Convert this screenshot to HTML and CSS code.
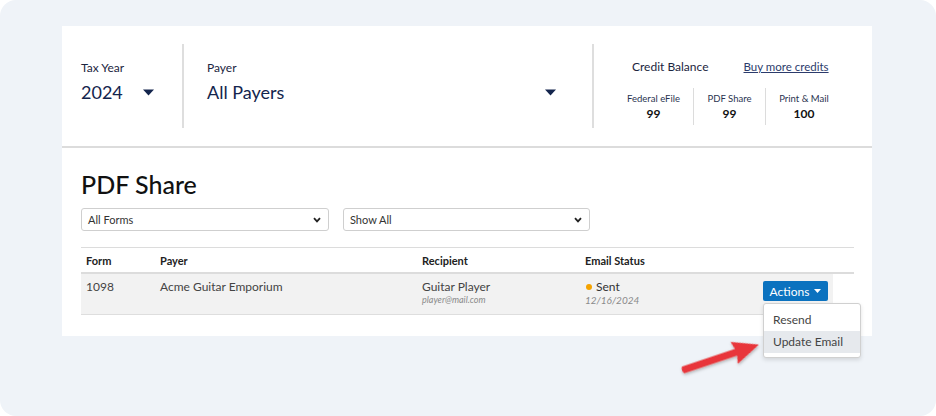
FILE: index.html
```html
<!DOCTYPE html>
<html>
<head>
<meta charset="utf-8">
<link rel="stylesheet" href="styles.css">
</head>
<body>
<div class="frame">
  <div class="card">
    <div class="header">
      <div class="sec sec-year">
        <div class="label">Tax Year</div>
        <div class="value-row">
          <span class="value">2024</span>
          <svg class="caret" width="11" height="7" viewBox="0 0 11 7"><path d="M0 0.5 H11 L5.5 6.5 Z" fill="#14254d"/></svg>
        </div>
      </div>
      <div class="sec sec-payer">
        <div class="label">Payer</div>
        <div class="value-row spread">
          <span class="value">All Payers</span>
          <svg class="caret" width="11" height="7" viewBox="0 0 11 7"><path d="M0 0.5 H11 L5.5 6.5 Z" fill="#14254d"/></svg>
        </div>
      </div>
      <div class="sec sec-credit">
        <div class="credit-top">
          <span class="credit-title">Credit Balance</span>
          <a class="buy" href="#">Buy more credits</a>
        </div>
        <div class="credit-cols">
          <div class="ccol c1"><div class="clabel">Federal eFile</div><div class="cnum">99</div></div>
          <div class="ccol c2"><div class="clabel">PDF Share</div><div class="cnum">99</div></div>
          <div class="ccol c3"><div class="clabel">Print &amp; Mail</div><div class="cnum">100</div></div>
        </div>
      </div>
    </div>
    <div class="body">
      <h1 class="title">PDF Share</h1>
      <div class="filters">
        <div class="select"><span>All Forms</span>
          <svg width="8" height="6" viewBox="0 0 8 6"><path d="M1 1.2 L4 4.4 L7 1.2" fill="none" stroke="#222" stroke-width="1.8"/></svg>
        </div>
        <div class="select"><span>Show All</span>
          <svg width="8" height="6" viewBox="0 0 8 6"><path d="M1 1.2 L4 4.4 L7 1.2" fill="none" stroke="#222" stroke-width="1.8"/></svg>
        </div>
      </div>
      <div class="table">
        <div class="thead">
          <div class="th">Form</div>
          <div class="th">Payer</div>
          <div class="th">Recipient</div>
          <div class="th">Email Status</div>
          <div class="th"></div>
        </div>
        <div class="trow">
          <div class="td">1098</div>
          <div class="td">Acme Guitar Emporium</div>
          <div class="td"><div>Guitar Player</div><div class="sub">player@mail.com</div></div>
          <div class="td"><div class="status"><span class="dot"></span>Sent</div><div class="sub date">12/16/2024</div></div>
          <div class="td td-act">
            <div class="actions">Actions
              <svg width="7" height="4" viewBox="0 0 7 4"><path d="M0 0 H7 L3.5 4 Z" fill="#fff"/></svg>
            </div>
            <div class="menu">
              <div class="item">Resend</div>
              <div class="item active">Update Email</div>
            </div>
          </div>
        </div>
      </div>
    </div>
  </div>
  <svg class="arrow" width="100" height="60" viewBox="0 0 100 60">
    <defs>
      <filter id="sh" x="-20%" y="-40%" width="140%" height="180%">
        <feDropShadow dx="0" dy="1.5" stdDeviation="1.5" flood-color="#000" flood-opacity="0.3"/>
      </filter>
    </defs>
    <g transform="translate(13,45) rotate(-18.5)" filter="url(#sh)">
      <path d="M0 -3.4 L56 -3.4 L54 -11.5 L80 0 L54 11.5 L56 3.4 L0 3.4 Q-2 0 0 -3.4 Z" fill="#e8363a"/>
    </g>
  </svg>
</div>
</body>
</html>
```

FILE: styles.css
```css
* { box-sizing: border-box; }
html, body { margin: 0; padding: 0; background: #fff; }
body { font-family: Lato, "Open Sans", Arial, sans-serif; }

.frame {
  position: relative;
  width: 936px;
  height: 416px;
  background: #eff3f8;
  border-radius: 16px;
  padding: 26px 0 0 62px;
}

.card {
  width: 810px;
  height: 310px;
  background: #fff;
}

.header {
  display: flex;
  height: 122px;
  padding: 18px 0;
  border-bottom: 2px solid #dcdcdc;
}

.sec { height: 84px; }
.sec-year {
  width: 122px;
  padding: 16px 0 0 19px;
  border-right: 2px solid #dedede;
}
.sec-payer {
  width: 410px;
  padding: 16px 36px 0 23px;
  border-right: 2px solid #dedede;
}
.sec-credit {
  flex: 1;
  padding: 14px 0 0 20px;
}

.label {
  font-size: 12px;
  line-height: 16px;
  color: #1b2540;
}
.value-row {
  display: flex;
  align-items: center;
  margin-top: 5px;
  height: 22px;
}
.value-row.spread { justify-content: space-between; }
.value {
  font-size: 18px;
  line-height: 22px;
  color: #14254d;
}
.sec-year .caret { margin-left: 20px; }

.credit-top {
  display: flex;
  align-items: center;
  padding-left: 18px;
  height: 16px;
}
.credit-title {
  font-size: 12px;
  color: #1b2540;
}
.buy {
  margin-left: 35px;
  font-size: 11.5px;
  color: #2c3b6c;
  text-decoration: underline;
}
.credit-cols {
  display: flex;
  margin-top: 14px;
}
.ccol {
  padding: 4px 0 3px;
  text-align: center;
  border-right: 1px solid #dcdcdc;
}
.c1 { width: 80px; }
.c2 { width: 72px; }
.c3 { width: 76px; border-right: none; }
.clabel {
  font-size: 9.5px;
  line-height: 13px;
  color: #2a3350;
  white-space: nowrap;
}
.cnum {
  font-size: 12px;
  line-height: 17px;
  font-weight: 700;
  color: #111;
}

.body {
  padding: 0 18px 0 19px;
}
.title {
  margin: 21px 0 0;
  font-size: 25px;
  line-height: 30px;
  font-weight: 500;
  color: #111;
}
.filters {
  display: flex;
  gap: 14px;
  margin-top: 9px;
}
.select {
  width: 248px;
  height: 23px;
  border: 1px solid #cfcfcf;
  border-radius: 3px;
  display: flex;
  align-items: center;
  justify-content: space-between;
  padding: 0 7px 0 6px;
  font-size: 11px;
  color: #333;
}
.select + .select { width: 247px; }

.table {
  margin-top: 16px;
  border-top: 1px solid #dcdcdc;
}
.thead, .trow {
  display: grid;
  grid-template-columns: 74px 262px 163px 1fr auto;
}
.thead {
  height: 26px;
  align-items: center;
  border-bottom: 2px solid #dcdcdc;
}
.th {
  padding: 0 5px;
  font-size: 11px;
  font-weight: 700;
  color: #222;
}
.trow {
  margin-right: 21px;
  height: 41px;
  background: #f2f2f2;
  border-bottom: 1px solid #dedede;
}
.td {
  padding: 5px 5px 0;
  font-size: 12px;
  line-height: 15px;
  color: #444;
}
.sub {
  font-size: 9px;
  line-height: 12px;
  font-style: italic;
  color: #8a8a8a;
}
.date { font-size: 10px; }
.status { display: flex; align-items: center; color: #333; }
.dot {
  width: 6px;
  height: 6px;
  border-radius: 50%;
  background: #f5a300;
  margin: 0 4px 0 1px;
}
.td-act {
  position: relative;
  padding-top: 7px;
}
.actions {
  width: 65px;
  height: 20px;
  background: #0b72bf;
  border-radius: 2px;
  color: #fff;
  font-size: 12px;
  display: flex;
  align-items: center;
  justify-content: center;
  gap: 5px;
}
.menu {
  position: absolute;
  left: 5px;
  top: 29px;
  width: 98px;
  padding: 5px 0 4px;
  background: #fff;
  border: 1px solid #d0d0d0;
  border-radius: 3px;
  box-shadow: 0 2px 4px rgba(0,0,0,0.12);
  z-index: 2;
}
.item {
  height: 22px;
  line-height: 22px;
  padding: 0 9px;
  font-size: 12px;
  color: #444;
}
.item.active { background: #e6e9ed; }

.arrow {
  position: absolute;
  left: 670px;
  top: 325px;
  z-index: 3;
}
```
